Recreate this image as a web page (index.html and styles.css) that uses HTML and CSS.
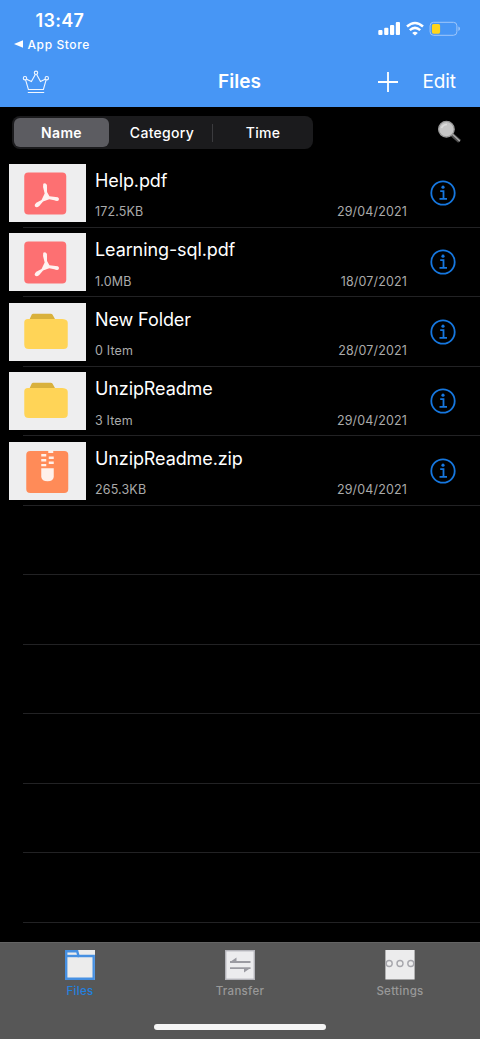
FILE: index.html
```
<!DOCTYPE html>
<html lang="en">
<head>
<meta charset="utf-8">
<title>Files</title>
<link rel="stylesheet" href="styles.css">
</head>
<body>
<svg class="defs" width="0" height="0">
  <symbol id="pdf" viewBox="0 0 76 58">
    <rect x="15" y="8.5" width="42" height="42" rx="4" fill="#fd7072"/>
    <path d="M34 19.8Q36.5 18.5 37.7 21L37.8 28L40.2 32.2L48.5 33.3Q50.7 34.7 49 36.8Q47 37.3 45 36.2L40 35.2L33.8 37.6L30 42Q27 44.5 25.5 42Q25 40.5 27 38.7L32.3 36.1L35.4 29.5L33.8 23Z" fill="#fff2f0"/>
  </symbol>
  <symbol id="folder" viewBox="0 0 76 58">
    <path d="M20 17L22.5 11.5Q23 10.7 24 10.7H41.5Q42.7 10.7 43.2 11.6L46.3 17Z" fill="#d9b13c"/>
    <path d="M15 19.5Q15 16 18.5 16H53Q55 16 55.6 16.5Q58.5 17 58.5 20V42Q58.5 46 54.5 46H19.5Q15 46 15 41.5Z" fill="#ffd457"/>
  </symbol>
  <symbol id="zip" viewBox="0 0 76 58">
    <rect x="17" y="9" width="42" height="42" rx="4" fill="#ff8b58"/>
    <path d="M39 8H44V11H39ZM32 12H37V14.5H32ZM39.5 14.5H44.5V17H39.5ZM32 17H37V19.5H32ZM39.5 19.5H44.5V22H39.5ZM32 22H37V24.2H32ZM32 26.2H44.5V35Q44 39.2 38.3 39.2T32 35Z" fill="#fff1eb"/>
  </symbol>
  <symbol id="info" viewBox="0 0 28 28">
    <circle cx="14" cy="14" r="11.7" fill="none" stroke="#1677df" stroke-width="1.8"/>
    <circle cx="14" cy="8.2" r="1.6" fill="#1677df"/>
    <path d="M11.2 12.1H14.5V19.7M10.5 19.9H18" fill="none" stroke="#1677df" stroke-width="1.8"/>
  </symbol>
</svg>
<header class="header">
  <div class="status">
    <div class="status-left">
      <div class="clock">13:47</div>
      <div class="back"><svg width="9" height="8" viewBox="0 0 9 8"><path d="M0 4L9 .2V7.8Z" fill="#fff"/></svg><span>App Store</span></div>
    </div>
    <svg class="indicators" width="84" height="18" viewBox="376 20 84 18">
      <g fill="#fff">
        <rect x="378.3" y="30" width="4.2" height="5" rx="1"/>
        <rect x="384.2" y="27.8" width="4.2" height="7.2" rx="1"/>
        <rect x="390" y="25" width="4.2" height="10" rx="1"/>
        <rect x="395.8" y="22" width="4.2" height="13" rx="1"/>
        <path d="M412.2 32.9Q415 30.7 417.8 32.9L415 35.6Z"/>
      </g>
      <path d="M407 26.5Q415 19.6 423 26.5M409.8 30.1Q415 25.6 420.2 30.1" fill="none" stroke="#fff" stroke-width="2.5"/>
      <rect x="430.1" y="22.3" width="26.8" height="13" rx="3.5" fill="none" stroke="#a0c7fa"/>
      <rect x="431.9" y="24.1" width="8.2" height="9.6" rx="1.6" fill="#ffd51c"/>
      <path d="M458.4 26.6Q460 27.2 460 28.8T458.4 31Z" fill="#a0c7fa"/>
    </svg>
  </div>
  <nav class="nav">
    <svg width="28" height="26" viewBox="22 67 28 26" fill="none" stroke="#f1f7ff" stroke-width="1.1">
      <circle cx="36" cy="70.8" r="1.7"/><circle cx="25" cy="76.2" r="1.7"/><circle cx="46.8" cy="76.2" r="1.7"/>
      <path d="M25.6 77.9L28.4 87.5H43.4L46.1 77.9M26.6 77.2L31.4 79.6L35.3 72.5M36.7 72.5L40.5 79.6L45.2 77.2M27.8 90.5H44.2"/>
    </svg>
    <h1 class="title">Files</h1>
    <div class="actions">
      <svg width="20" height="20" viewBox="0 0 20 20"><path d="M10 0V20M0 10H20" stroke="#fff" stroke-width="1.8"/></svg>
      <span class="edit">Edit</span>
    </div>
  </nav>
</header>
<div class="toolbar">
  <div class="segments">
    <div class="segment selected">Name</div>
    <div class="segment category">Category</div>
    <div class="segment last">Time</div>
  </div>
  <svg width="26" height="26" viewBox="436 120 26 26">
    <path d="M451.8 134.5L459.5 141.3" stroke="#4f4f4f" stroke-width="4"/>
    <path d="M452.2 134L460 141.2" stroke="#aaa" stroke-width="1.4"/>
    <circle cx="446.4" cy="129.2" r="7.8" fill="#c6c6c6" stroke="#999" stroke-width="1.3"/>
    <path d="M441.5 128Q443 124.5 447 124.5" fill="none" stroke="#ddd" stroke-width="1.6"/>
  </svg>
</div>
<main class="list">
  <div class="row"><svg class="thumb"><use href="#pdf"/></svg><div class="name">Help.pdf</div><div class="size">172.5KB</div><div class="date">29/04/2021</div><svg class="info"><use href="#info"/></svg></div>
  <div class="row"><svg class="thumb"><use href="#pdf"/></svg><div class="name">Learning-sql.pdf</div><div class="size">1.0MB</div><div class="date">18/07/2021</div><svg class="info"><use href="#info"/></svg></div>
  <div class="row"><svg class="thumb"><use href="#folder"/></svg><div class="name">New Folder</div><div class="size">0 Item</div><div class="date">28/07/2021</div><svg class="info"><use href="#info"/></svg></div>
  <div class="row"><svg class="thumb"><use href="#folder"/></svg><div class="name">UnzipReadme</div><div class="size">3 Item</div><div class="date">29/04/2021</div><svg class="info"><use href="#info"/></svg></div>
  <div class="row"><svg class="thumb"><use href="#zip"/></svg><div class="name">UnzipReadme.zip</div><div class="size">265.3KB</div><div class="date">29/04/2021</div><svg class="info"><use href="#info"/></svg></div>
  <div class="row"></div><div class="row"></div><div class="row"></div><div class="row"></div><div class="row"></div><div class="row"></div>
</main>
<footer class="footer">
  <div class="tabs">
    <div class="tab active">
      <svg width="30" height="30" viewBox="0 0 30 30"><path d="M0 0H30V30H0Z" fill="#ececec"/><path d="M1.2 28.7V1.2H12.2L13.5 6H28.7V28.7Z" fill="#ececec" stroke="#4690e2" stroke-width="2.4"/><path d="M1 6H14" stroke="#4690e2" stroke-width="2.4"/></svg>
      <span>Files</span>
    </div>
    <div class="tab">
      <svg width="30" height="30" viewBox="0 0 30 30"><rect x=".7" y=".7" width="28.6" height="28.6" fill="#ececee" stroke="#b4b4ba" stroke-width="1.4"/><path d="M5 12H25.5M5 18.2H25.5" stroke="#9a9aa1" stroke-width="1.8"/><path d="M5 12L11.5 7.6V12ZM25.5 18L19 22.4V18Z" fill="#9a9aa1"/></svg>
      <span>Transfer</span>
    </div>
    <div class="tab">
      <svg width="30" height="30" viewBox="0 0 30 30"><rect x=".4" width="29.2" height="29.5" fill="#ececed"/><g fill="#eee" stroke="#a6a6ac" stroke-width="1.4"><circle cx="4.2" cy="13.5" r="3"/><circle cx="15" cy="13.5" r="3"/><circle cx="25.8" cy="13.5" r="3"/></g></svg>
      <span>Settings</span>
    </div>
  </div>
  <div class="home"></div>
</footer>
</body>
</html>
```
FILE: styles.css
```
* { box-sizing: border-box; }
body { margin: 0; width: 480px; height: 1039px; overflow: hidden; display: flex; flex-direction: column; background: #000; color: #fff; font-family: Inter, "Liberation Sans", sans-serif; }
svg { display: block; flex: none; }
.defs { position: absolute; }
.header { height: 107px; flex: none; background: #4796f5; }
.status { height: 56px; display: flex; justify-content: space-between; padding: 0 20px 0 14px; }
.status-left { padding-top: 10px; }
.clock { font-size: 18px; font-weight: 600; line-height: 22px; padding-left: 21.5px; letter-spacing: .3px; }
.back { display: flex; align-items: center; gap: 4.5px; height: 24px; font-size: 12px; font-weight: 500; letter-spacing: .6px; }
.indicators { margin-top: 20px; }
.nav { height: 51px; display: grid; grid-template-columns: 1fr auto 1fr; align-items: center; padding: 0 24px 0 22px; }
.title { margin: 0; font-size: 19px; font-weight: 600; line-height: 24px; padding-left: 1px; }
.actions { display: flex; align-items: center; justify-content: flex-end; gap: 24.5px; }
.edit { font-size: 19px; line-height: 24px; letter-spacing: -.1px; }
.toolbar { height: 51px; flex: none; display: flex; justify-content: space-between; align-items: center; padding: 0 18px 0 12px; }
.segments { display: flex; width: 301px; height: 33px; padding: 2px; border-radius: 8px; background: #1b1b1d; }
.segment { flex: 1; display: flex; align-items: center; justify-content: center; font-size: 14px; font-weight: 500; letter-spacing: .3px; }
.selected { flex: none; width: 95px; border-radius: 6px; background: #5c5c61; font-weight: 600; }
.category { flex: none; width: 103px; padding-left: 3px; }
.last { position: relative; padding-left: 3px; }
.last::before { content: ""; position: absolute; left: 0; top: 6px; height: 18px; width: 1px; background: #3b3b3e; }
.list { flex: none; height: 784px; overflow: hidden; }
.row { position: relative; height: 69.5px; display: grid; grid-template-columns: 76.5px 160px 155px 28px; grid-template-rows: 30px 28px; column-gap: 9.5px; padding: 5.5px 0 6px 9px; }
.row::after { content: ""; position: absolute; left: 23px; right: 0; bottom: 0; height: 1px; background: #222224; }
.thumb { width: 76.5px; height: 58px; grid-row: 1 / 3; background: #eeeeef; }
.name { font-size: 18px; line-height: 22px; padding-top: 6px; white-space: nowrap; grid-column: 2 / 4; letter-spacing: -.1px; }
.size, .date { font-size: 12.5px; line-height: 16px; padding-top: 10.5px; color: #aaa; grid-row: 2; letter-spacing: .15px; }
.size { grid-column: 2; }
.date { grid-column: 3; text-align: right; margin-right: 12.5px; }
.info { width: 28px; height: 28px; grid-column: 4; grid-row: 1 / 3; align-self: center; margin-left: -.5px; }
.footer { height: 97px; flex: none; background: #575757; border-top: 1px solid #646464; display: flex; flex-direction: column; align-items: center; }
.tabs { width: 100%; height: 81px; display: grid; grid-template-columns: 1fr 1fr 1fr; padding-top: 7px; }
.tab { display: flex; flex-direction: column; align-items: center; gap: 3.5px; font-size: 11.5px; line-height: 15px; font-weight: 500; letter-spacing: .3px; color: #999; }
.active { color: #2380df; }
.home { width: 172px; height: 6px; border-radius: 3px; background: #f5f5f5; }
```
